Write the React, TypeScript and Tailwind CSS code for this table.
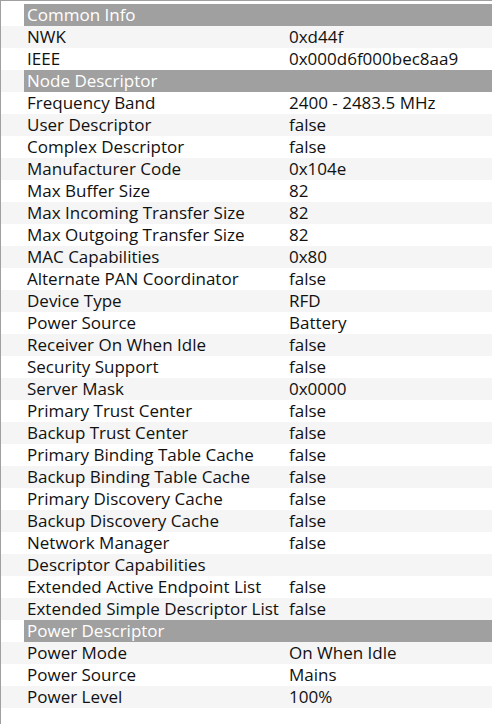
import React from "react";

type Row = { h: string } | { k: string; v: string };

const rows: Row[] = [
  { h: "Common Info" },
  { k: "NWK", v: "0xd44f" },
  { k: "IEEE", v: "0x000d6f000bec8aa9" },
  { h: "Node Descriptor" },
  { k: "Frequency Band", v: "2400 - 2483.5 MHz" },
  { k: "User Descriptor", v: "false" },
  { k: "Complex Descriptor", v: "false" },
  { k: "Manufacturer Code", v: "0x104e" },
  { k: "Max Buffer Size", v: "82" },
  { k: "Max Incoming Transfer Size", v: "82" },
  { k: "Max Outgoing Transfer Size", v: "82" },
  { k: "MAC Capabilities", v: "0x80" },
  { k: "Alternate PAN Coordinator", v: "false" },
  { k: "Device Type", v: "RFD" },
  { k: "Power Source", v: "Battery" },
  { k: "Receiver On When Idle", v: "false" },
  { k: "Security Support", v: "false" },
  { k: "Server Mask", v: "0x0000" },
  { k: "Primary Trust Center", v: "false" },
  { k: "Backup Trust Center", v: "false" },
  { k: "Primary Binding Table Cache", v: "false" },
  { k: "Backup Binding Table Cache", v: "false" },
  { k: "Primary Discovery Cache", v: "false" },
  { k: "Backup Discovery Cache", v: "false" },
  { k: "Network Manager", v: "false" },
  { k: "Descriptor Capabilities", v: "" },
  { k: "Extended Active Endpoint List", v: "false" },
  { k: "Extended Simple Descriptor List", v: "false" },
  { h: "Power Descriptor" },
  { k: "Power Mode", v: "On When Idle" },
  { k: "Power Source", v: "Mains" },
  { k: "Power Level", v: "100%" },
];

export default function App() {
  return (
    <div
      className="w-[492px] h-[724px] bg-white border-l border-t border-[#a0a0a0] pt-[3px] overflow-hidden text-[17px] text-[#111] leading-[22px]"
      style={{ fontFamily: '"Open Sans", "Noto Sans", sans-serif' }}
    >
      {rows.map((r, i) => {
        const bg = i % 2 === 1 ? "bg-[#f5f5f5]" : "bg-white";
        if ("h" in r) {
          return (
            <div key={i} className={`flex h-[22px] ${bg}`}>
              <div className="w-[23px] shrink-0" />
              <div className="flex-1 bg-[#a0a0a0] text-white pl-[3px] whitespace-nowrap">
                {r.h}
              </div>
            </div>
          );
        }
        return (
          <div key={i} className={`flex h-[22px] ${bg}`}>
            <div className="w-[23px] shrink-0" />
            <div className="w-[261px] shrink-0 pl-[3px] whitespace-nowrap overflow-hidden">
              {r.k}
            </div>
            <div className="flex-1 pl-[4px] whitespace-nowrap">{r.v}</div>
          </div>
        );
      })}
    </div>
  );
}
